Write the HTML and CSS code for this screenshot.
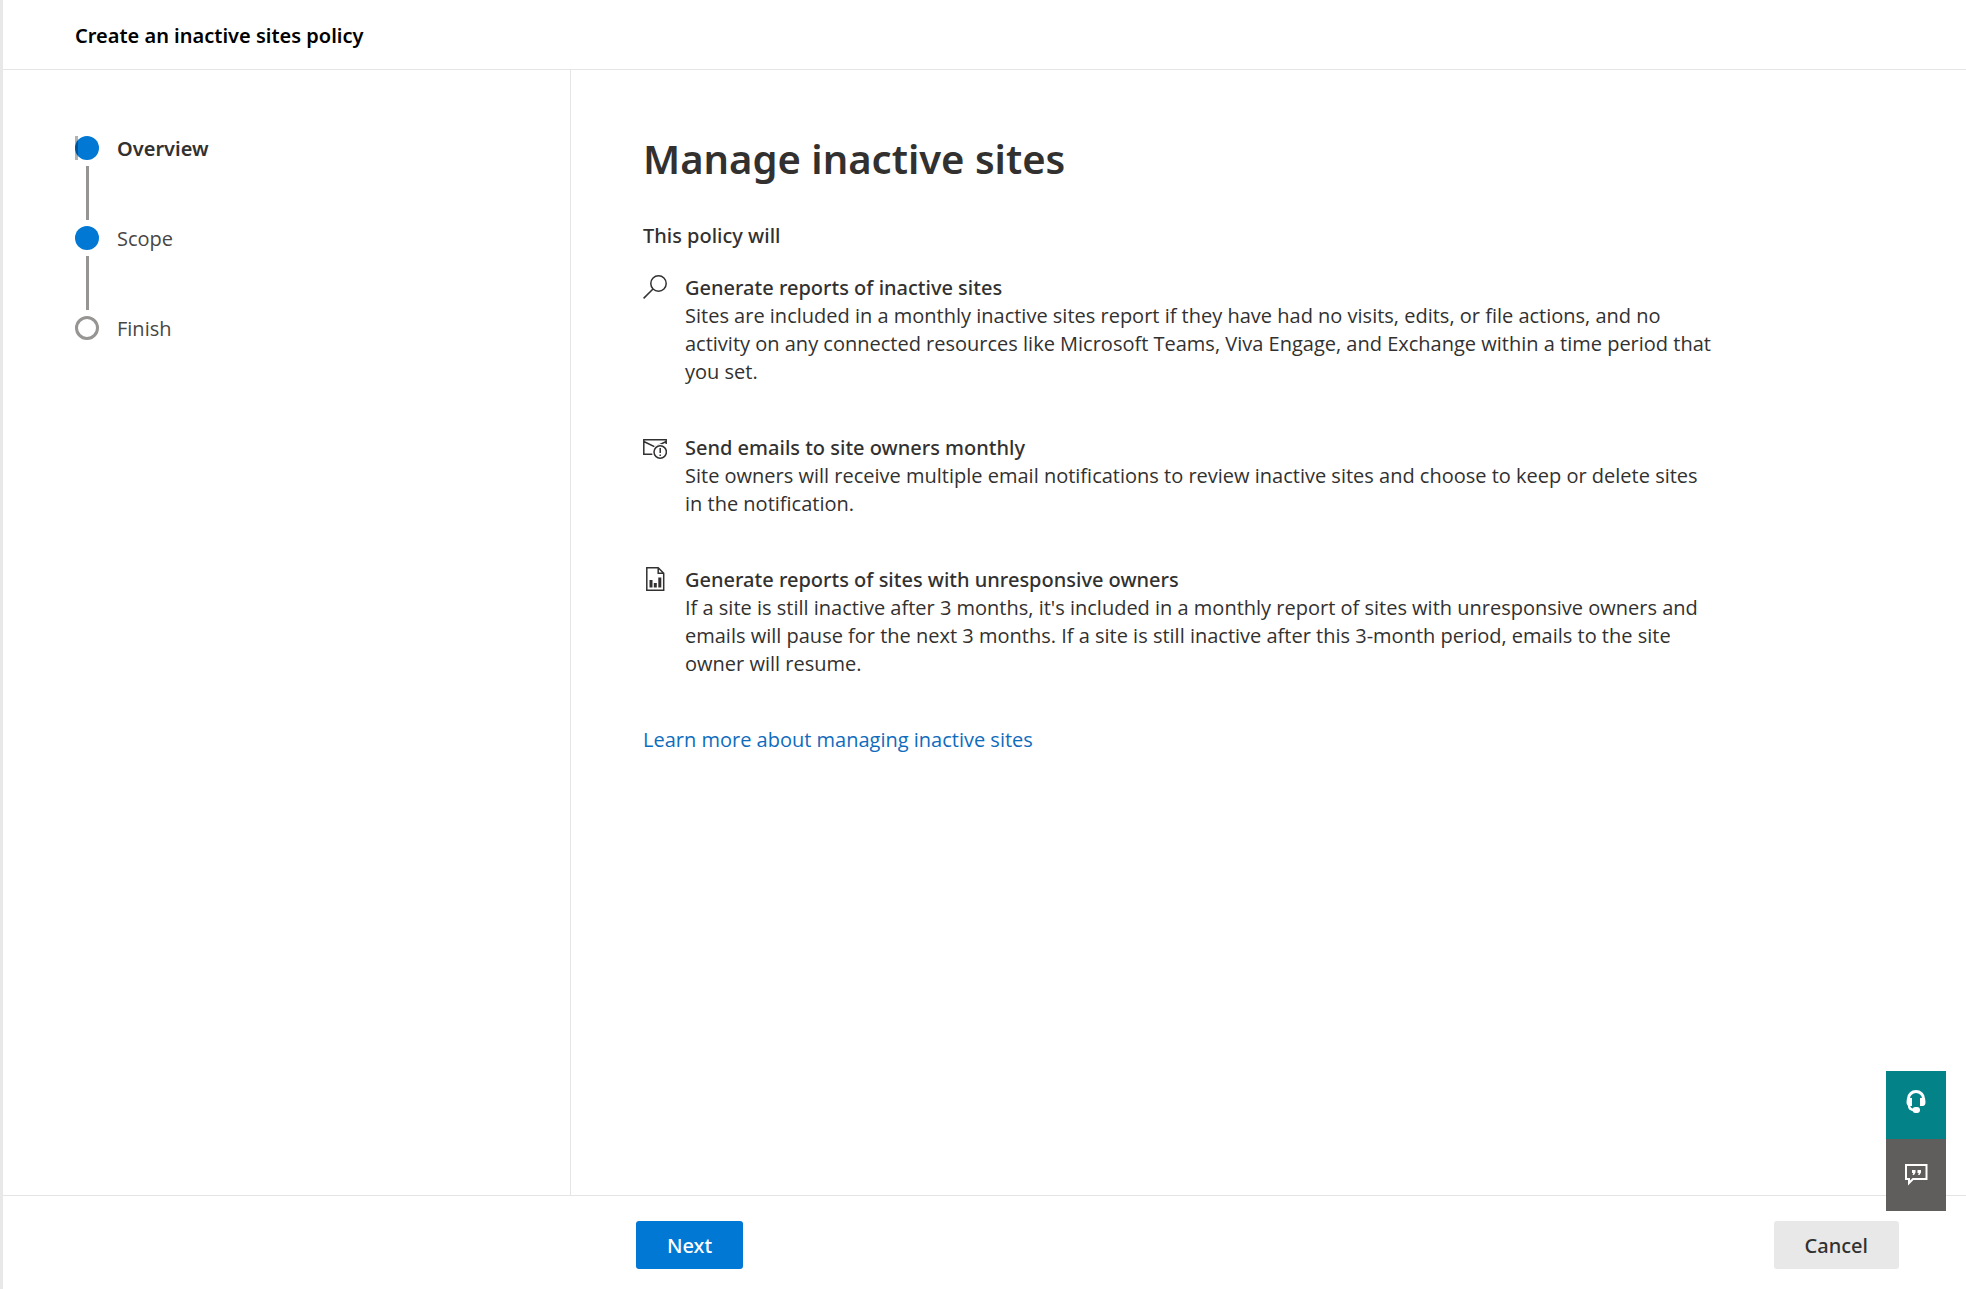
FILE: index.html
```html
<!DOCTYPE html>
<html lang="en">
<head>
<meta charset="utf-8">
<title>Create an inactive sites policy</title>
<link rel="stylesheet" href="styles.css">
</head>
<body>
<div class="panel">
  <header class="panel-header">
    <h2 class="panel-title">Create an inactive sites policy</h2>
  </header>
  <div class="panel-body">
    <nav class="sidebar" aria-label="Progress">
      <ol class="steps">
        <li class="step step-current" aria-current="step"><span class="dot dot-focus"></span><span>Overview</span></li>
        <li class="step"><span class="dot"></span><span>Scope</span></li>
        <li class="step"><span class="dot dot-empty"></span><span>Finish</span></li>
      </ol>
    </nav>
    <main class="content">
      <h1 class="page-title">Manage inactive sites</h1>
      <p class="lead">This policy will</p>
      <ul class="features">
        <li class="feature">
          <svg class="feature-icon" viewBox="0 0 24 24" aria-hidden="true"><circle cx="15.500" cy="8.500" r="7.700"/><path d="M10 14 .6 23.400"/></svg>
          <div>
            <h3 class="feature-title">Generate reports of inactive sites</h3>
            <p class="feature-text">Sites are included in a monthly inactive sites report if they have had no visits, edits, or file actions, and no activity on any connected resources like Microsoft Teams, Viva Engage, and Exchange within a time period that you set.</p>
          </div>
        </li>
        <li class="feature">
          <svg class="feature-icon" viewBox="0 0 24 24" aria-hidden="true"><path d="M9.500 19.200H.8V4.800h22.400V9M.8 6.500 12 12l11.200-5.500"/><circle class="icon-knockout" cx="17.200" cy="17" r="8"/><circle cx="17.200" cy="17" r="6.200"/><path d="M17.200 13v5M17.200 19.400v1.600"/></svg>
          <div>
            <h3 class="feature-title">Send emails to site owners monthly</h3>
            <p class="feature-text">Site owners will receive multiple email notifications to review inactive sites and choose to keep or delete sites in the notification.</p>
          </div>
        </li>
        <li class="feature">
          <svg class="feature-icon" viewBox="0 0 24 24" aria-hidden="true"><path d="M3.800.8h11.400l5.500 5.500v16.900H3.800zM15.200.8v5.500h5.500"/><path class="icon-bars" d="M8 13v7.500M12.300 16v4.500M16.800 10.500v10"/></svg>
          <div>
            <h3 class="feature-title">Generate reports of sites with unresponsive owners</h3>
            <p class="feature-text">If a site is still inactive after 3 months, it's included in a monthly report of sites with unresponsive owners and emails will pause for the next 3 months. If a site is still inactive after this 3-month period, emails to the site owner will resume.</p>
          </div>
        </li>
      </ul>
      <a class="learn-more" href="#">Learn more about managing inactive sites</a>
    </main>
  </div>
  <footer class="panel-footer">
    <button class="button button-primary" type="button">Next</button>
    <button class="button" type="button">Cancel</button>
  </footer>
</div>
<div class="support">
  <button class="support-button support-help" type="button" aria-label="Help">
    <svg class="support-icon" viewBox="0 0 24 24" aria-hidden="true"><path class="fill" d="M3 9h5v8H5.500C3.500 17 2.500 15.500 2.500 13zM21 9h-5v8h2.500c2 0 3-1.500 3-4z"/><path d="M4.500 11V9.500a7.500 7 0 0 1 15 0V11" stroke-width="3"/><path d="M5 16c0 3 2 5 5.500 5" stroke-width="2.400"/><rect class="fill" x="8.500" y="18" width="7.500" height="6" rx="3"/></svg>
  </button>
  <button class="support-button support-feedback" type="button" aria-label="Feedback">
    <svg class="support-icon" viewBox="0 0 24 24" aria-hidden="true"><path d="M2 3h20.500v14H9l-4 4v-4H2z" stroke-width="2"/><path class="fill" d="M8 8h3.500v2.500L10 13H8.500l.8-2H8zM13.500 8H17v2.500L15.500 13H14l.8-2h-1.300z"/></svg>
  </button>
</div>
</body>
</html>
```
FILE: styles.css
```css
* {
  box-sizing: border-box;
}

body {
  margin: 0;
  font-family: "Open Sans", "Noto Sans", sans-serif;
  font-size: 20px;
  line-height: 28px;
  color: #323130;
  background: #fff;
}

h1,
h2,
h3,
p,
ol,
ul {
  margin: 0;
  padding: 0;
}

ol,
ul {
  list-style: none;
}

/* Emphasised text uses the family with medium and semibold cuts */
.panel-title,
.step-current,
.page-title,
.lead,
.feature-title,
.button {
  font-family: "Noto Sans", "Open Sans", sans-serif;
}

.panel {
  display: flex;
  flex-direction: column;
  min-height: 100vh;
  border-left: 3px solid #e8e8e8;
}

.panel-header {
  padding: 22px 72px 19px;
  border-bottom: 1px solid #e5e5e5;
}

.panel-title {
  font-size: 20px;
  font-weight: 600;
  color: #000;
}

.panel-body {
  display: flex;
  flex: 1;
}

.sidebar {
  flex: 0 0 568px;
  padding: 66px 72px;
  border-right: 1px solid #e5e5e5;
}

.steps {
  display: grid;
  gap: 66px;
}

.step {
  position: relative;
  display: flex;
  align-items: flex-start;
  gap: 18px;
  height: 24px;
  line-height: 26px;
  color: #484644;
}

.step-current {
  font-weight: 600;
  color: #323130;
}

/* Connector drawn between one step and the next */
.step:not(:last-child)::after {
  content: "";
  position: absolute;
  top: 30px;
  left: 11px;
  width: 3px;
  height: 54px;
  background: #979593;
}

.dot {
  position: relative;
  width: 24px;
  height: 24px;
  border-radius: 50%;
  background: #0078d4;
}

.dot-focus::before {
  content: "";
  position: absolute;
  inset: 0 auto 0 0;
  width: 3px;
  background: rgba(0, 0, 0, 0.3);
}

.dot-empty {
  border: 3px solid #979593;
  background: #fff;
}

.content {
  flex: 1;
  padding: 59px 72px;
}

.page-title {
  font-size: 40px;
  line-height: 60px;
  font-weight: 600;
}

.lead {
  margin-top: 33px;
  font-weight: 500;
}

.features {
  display: grid;
  gap: 48px;
  max-width: 1072px;
  margin: 24px 0 48px;
}

.feature {
  display: flex;
  gap: 18px;
}

.feature-title {
  font-size: 20px;
  font-weight: 500;
}

.feature-icon {
  flex: none;
  width: 24px;
  height: 24px;
  margin-top: 1px;
  fill: none;
  stroke: #323130;
  stroke-width: 1.5;
}

.feature-icon .icon-knockout {
  fill: #fff;
  stroke: none;
}

.feature-icon .icon-bars {
  stroke-width: 3;
}

.learn-more {
  color: #0f6cbd;
  text-decoration: none;
}

.panel-footer {
  display: flex;
  justify-content: space-between;
  padding: 25px 67px 20px 633px;
  border-top: 1px solid #e5e5e5;
}

.button {
  height: 48px;
  padding: 2px 31px 0;
  border: 0;
  border-radius: 3px;
  font-size: 20px;
  line-height: 28px;
  font-weight: 500;
  color: #323130;
  background: #e8e8e8;
}

.button-primary {
  color: #fff;
  background: #0078d4;
}

/* Support buttons float above the panel */
.support {
  position: fixed;
  right: 20px;
  bottom: 78px;
  display: grid;
  width: 60px;
}

.support-button {
  display: grid;
  place-items: center;
  height: 72px;
  padding: 0 0 2px;
  border: 0;
}

.support-help {
  height: 68px;
  padding-bottom: 8px;
  background: #038387;
}

.support-feedback {
  background: #605e5c;
}

.support-icon {
  width: 24px;
  height: 24px;
  fill: none;
  stroke: #fff;
}

.support-icon .fill {
  fill: #fff;
  stroke: none;
}
```
